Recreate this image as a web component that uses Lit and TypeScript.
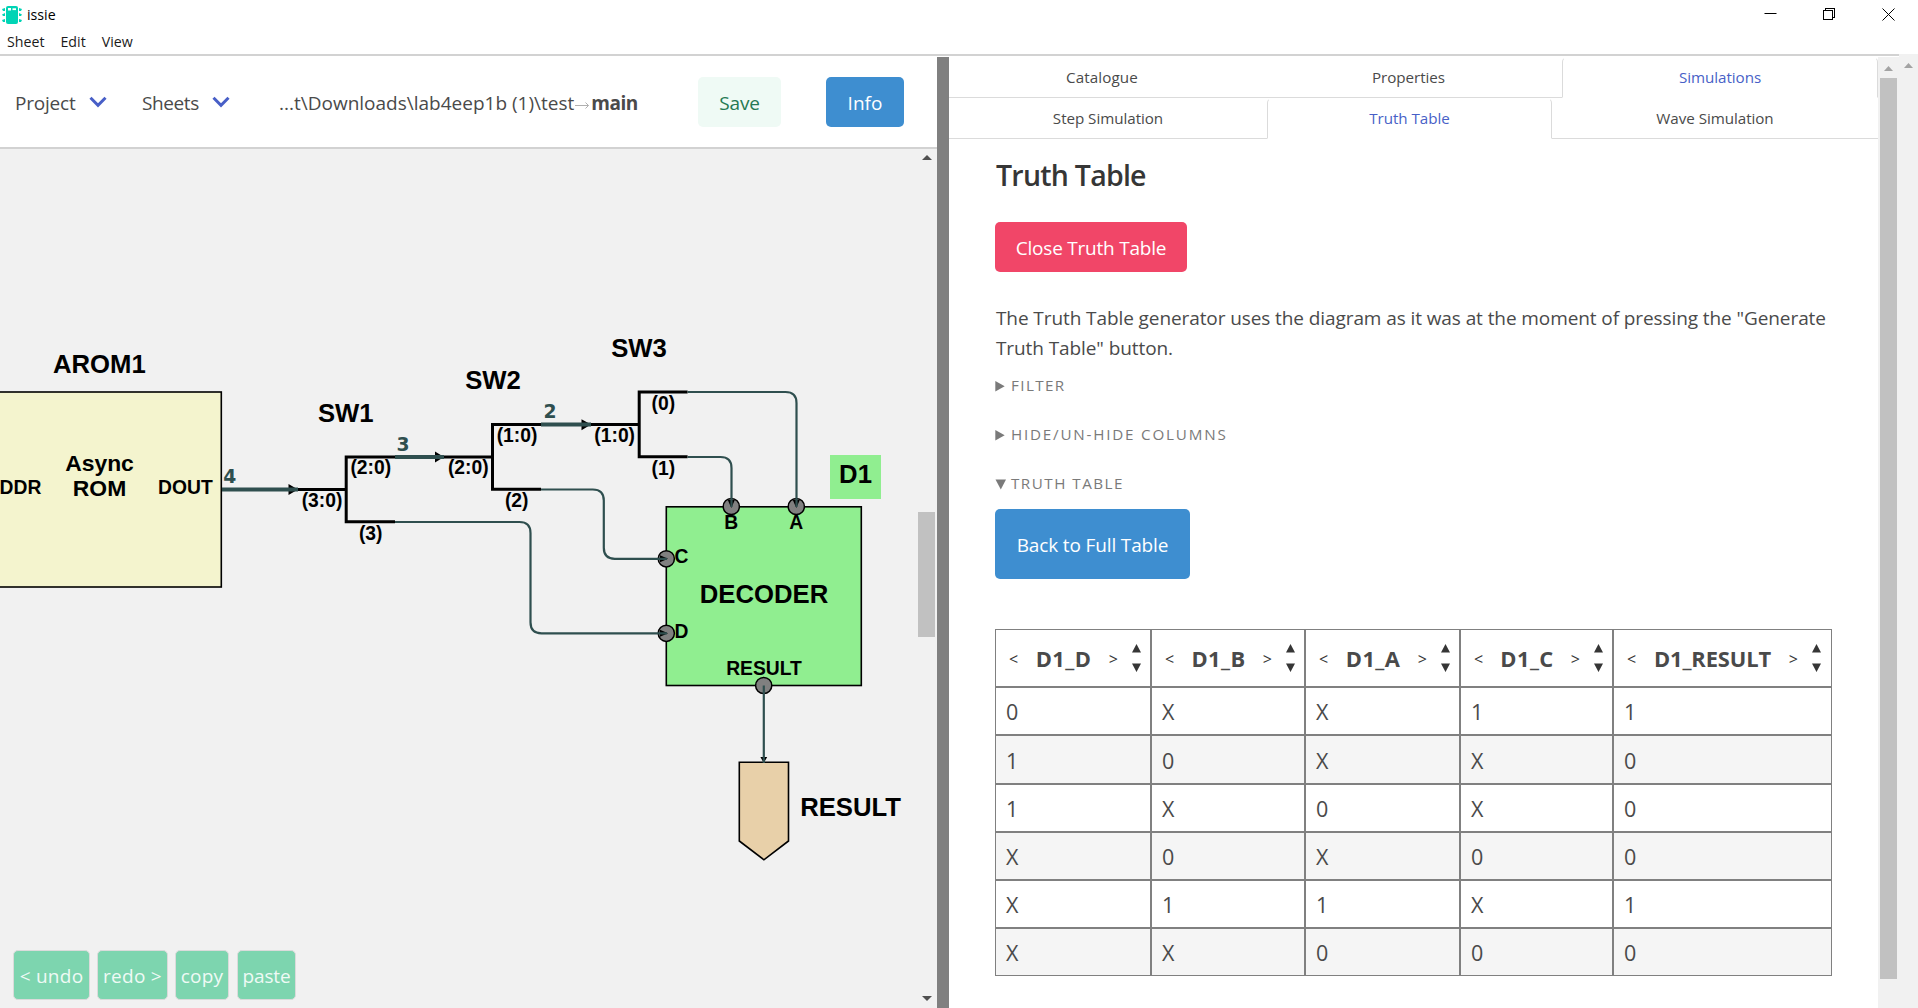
import { LitElement, html, svg, css } from 'lit';
import { customElement } from 'lit/decorators.js';
import { classMap } from 'lit/directives/class-map.js';

const ui = css`"Segoe UI", "Open Sans", "Noto Sans", sans-serif`;

@customElement('title-bar')
class TitleBar extends LitElement {
  static styles = css`
    :host { display: block; height: 54px; background: #fff; color: #000; font: 14.2px/20px ${ui}; }
    .caption { display: flex; height: 29px; align-items: center; padding-left: 2px; }
    .name { margin-left: 5px; color: #000; }
    .controls { margin-left: auto; margin-right: 23px; display: flex; gap: 46px; }
    .menu { display: flex; gap: 16px; padding: 3px 0 0 7px; }
    .menu span { color: #1a1a1a; }
    svg { display: block; }
  `;
  render() {
    return html`
      <div class="caption">
        <svg width="20" height="20" viewBox="0 0 20 20" fill="#00d4b5">
          <rect x="4" y="1" width="12" height="18" rx="2" />
          <path d="M0 4l3-1v3H1zM0 9.500l3-1.500v3H1zM0 15l3-1v3H1zM20 4l-3-1v3h2zM20 9.500l-3-1.500v3h2zM20 15l-3-1v3h2z" />
          <rect x="6" y="3" width="3" height="2.500" fill="#fff" />
          <rect x="10.500" y="3.300" width="3.500" height="1.800" fill="#fff" />
        </svg>
        <span class="name">issie</span>
        <div class="controls">
          <svg width="13" height="13" stroke="#000" fill="none"><path d="M0.500 5.500h12" /></svg>
          <svg width="13" height="13" stroke="#000" fill="none" shape-rendering="crispEdges">
            <rect x="0.500" y="2.500" width="9" height="9" /><path d="M2.500 2.500v-2h9v9h-2" />
          </svg>
          <svg width="13" height="13" stroke="#000" fill="none"><path d="M0.500 0.500l12 12M12.500 0.500l-12 12" /></svg>
        </div>
      </div>
      <div class="menu"><span>Sheet</span><span>Edit</span><span>View</span></div>
    `;
  }
}

@customElement('top-nav')
class TopNav extends LitElement {
  static styles = css`
    :host { display: flex; box-sizing: border-box; height: 93px; align-items: center; padding: 1px 33px 0 15px;
      background: #fff; border-bottom: 2px solid #d2d2d2; color: #4a4a4a; font: 19px/28px ${ui}; letter-spacing: -0.1px; }
    .drop { display: flex; align-items: center; justify-content: space-between; }
    .drop span, .path { padding-top: 2px; }
    .project { width: 92px; letter-spacing: -0.2px; }
    .sheets { width: 88px; margin-left: 35px; letter-spacing: -0.4px; }
    .path { display: flex; align-items: center; margin-left: 49px; white-space: nowrap; letter-spacing: 0; }
    .path b { letter-spacing: -0.5px; margin-left: 1px; }
    .path svg { margin-top: 3px; }
    .buttons { margin-left: auto; display: flex; gap: 45px; }
    .btn { box-sizing: border-box; height: 50px; line-height: 52px; border-radius: 5px; text-align: center; }
    .save { width: 83px; background: #effaf5; color: #257953; letter-spacing: -0.1px; }
    .info { width: 78px; background: #3e8ed0; color: #fff; letter-spacing: 0; }
    svg { display: block; }
  `;
  private chevron() {
    return html`<svg width="18" height="12" viewBox="0 0 18 12" fill="none" stroke="#485fc7" stroke-width="3"><path d="M1.500 1.800L9 9.300L16.500 1.800" /></svg>`;
  }
  render() {
    return html`
      <div class="drop project"><span>Project</span>${this.chevron()}</div>
      <div class="drop sheets"><span>Sheets</span>${this.chevron()}</div>
      <div class="path">
        <span>...t\\Downloads\\lab4eep1b (1)\\test</span>
        <svg width="16" height="8" viewBox="0 0 16 8" fill="none" stroke="#b0b0b0"><path d="M1 4.500h13.500M11.500 1.500l3 3l-3 3" /></svg>
        <b>main</b>
      </div>
      <div class="buttons"><div class="btn save">Save</div><div class="btn info">Info</div></div>
    `;
  }
}

const bigLabels: [number, number, string][] = [
  [99.3, 373.4, 'AROM1'], [345.8, 422, 'SW1'], [493, 389.4, 'SW2'], [639, 357.4, 'SW3'],
  [855.5, 482.7, 'D1'], [764, 603.4, 'DECODER'], [850.6, 816.4, 'RESULT'],
];
const portLabels: [number, number, string][] = [
  [20.5, 493.5, 'DDR'], [185.4, 493.5, 'DOUT'], [370.8, 474.3, '(2:0)'], [468.3, 474.3, '(2:0)'],
  [322, 506.9, '(3:0)'], [370.7, 539.5, '(3)'], [517, 442, '(1:0)'], [614.7, 442, '(1:0)'],
  [663.3, 409.5, '(0)'], [663.3, 474.5, '(1)'], [516.7, 506.9, '(2)'], [731.3, 528.7, 'B'],
  [796.3, 528.7, 'A'], [681.5, 562.5, 'C'], [681.5, 638, 'D'], [764, 674.8, 'RESULT'],
];
const widths: [number, number, string][] = [[229.7, 482.7, '4'], [403, 450.5, '3'], [550, 417.7, '2']];
const ports: [number, number][] = [[731.3, 506.5], [796.3, 506.5], [666.3, 558.8], [666.3, 633.3], [763.7, 685.5]];

@customElement('circuit-canvas')
class CircuitCanvas extends LitElement {
  static styles = css`
    :host { display: flex; position: relative; flex: 1; min-height: 0; background: #f1f1f1; }
    .sheet { display: block; flex: none; }
    .symbol { stroke: #000; stroke-width: 1.6; }
    .split { fill: none; stroke: #000; stroke-width: 3; }
    .wire { fill: none; stroke: #2f4f4f; stroke-width: 2.2; }
    .bus { fill: none; stroke: #2f4f4f; stroke-width: 4; }
    .big, .mid, .port { font-family: "Liberation Sans", Arial, sans-serif; font-weight: 700; text-anchor: middle; }
    .big { font-size: 25.7px; }
    .mid { font-size: 22.9px; }
    .port { font-size: 19.3px; }
    .width { font: 700 18.75px "DejaVu Sans", Verdana, sans-serif; text-anchor: middle; fill: #2f4f4f; }
    .edit { position: absolute; left: 13px; bottom: 8px; display: flex; gap: 8px; }
    .edit span { box-sizing: border-box; height: 50px; border: 1px solid #dbdbdb; border-radius: 5px; background: #7dd5af;
      color: #effaf5; font: 19px/50px ${ui}; text-align: center; white-space: pre; letter-spacing: 0.25px; }
    .undo { width: 77px; } .redo { width: 71px; } .copy { width: 54px; } .paste { width: 59px; }
    .edit .redo { margin-left: -1px; }
    .edit .copy { margin-left: -1px; }
    .edit .paste { letter-spacing: -0.1px; }
    .bar { display: flex; flex-direction: column; align-items: center; justify-content: space-between; width: 20px; box-sizing: border-box; padding: 6px 0 7px; }
    .bar svg { display: block; margin-right: 1px; }
    .thumb { width: 17px; height: 125px; margin: 0 1px 7px 0; background: #c1c1c1; }
  `;
  render() {
    return html`
      <svg class="sheet" width="917" height="859" viewBox="0 149 917 859">
        <rect class="symbol" x="-10" y="392" width="231.300" height="195" fill="#f4f4ce" />
        <rect x="830" y="455" width="51" height="44" fill="#90ee90" />
        <rect class="symbol" x="666.300" y="506.800" width="195" height="178.700" fill="#90ee90" />
        <path class="symbol" d="M739.300 762.200H788.500V841L763.900 859.800L739.300 841Z" fill="#e8d0a9" />
        <path class="split" d="M298 489.500H346M395 457H346.200V521.700H395M444 457H492.500M541 424.600H492.500V489.300H541M591 424.600H639.200M687.600 392H639.200V456.800H687.600" />
        ${ports.map(([x, y]) => svg`<circle cx=${x} cy=${y} r="8.100" fill="#808080" stroke="#000" stroke-width="1.500" />`)}
        <path d="M288.500 484V495L298 489.500ZM435 451.500V462.500L444 457ZM581.500 419.200V430.200L591 424.600Z" />
        <path d="M727.800 500H734.800L731.300 508ZM792.800 500H799.800L796.300 508ZM660 555.300V562.300L668 558.800ZM660 629.800V636.800L668 633.300ZM760.400 757H767.200L763.800 763Z" />
        <path class="bus" d="M222 489.500H298M395 457H444M541 424.600H591" />
        <path class="wire" d="M687.600 392H785.500Q796.500 392 796.500 403V507M687.600 457H720.500Q731.500 457 731.500 468V507M541 489.500H592.800Q603.800 489.500 603.800 500.500V547.800Q603.800 558.800 614.800 558.800H667M395 522H519.500Q530.500 522 530.500 533V622.300Q530.500 633.300 541.500 633.300H667M763.800 685.500V763" />
        ${bigLabels.map(([x, y, t]) => svg`<text class="big" x=${x} y=${y}>${t}</text>`)}
        <text class="mid" x="99.500" y="470.700">Async</text>
        <text class="mid" x="99.500" y="496.400">ROM</text>
        ${portLabels.map(([x, y, t]) => svg`<text class="port" x=${x} y=${y}>${t}</text>`)}
        ${widths.map(([x, y, t]) => svg`<text class="width" x=${x} y=${y}>${t}</text>`)}
      </svg>
      <div class="bar">
        <svg width="10" height="5" fill="#505050"><path d="M0 5L5 0L10 5Z" /></svg>
        <div class="thumb"></div>
        <svg width="10" height="5" fill="#505050"><path d="M0 0L5 5L10 0Z" /></svg>
      </div>
      <div class="edit">
        <span class="undo">&lt; undo</span><span class="redo">redo &gt;</span><span class="copy">copy</span><span class="paste">paste</span>
      </div>
    `;
  }
}

const columns = ['D1_D', 'D1_B', 'D1_A', 'D1_C', 'D1_RESULT'];
const rows = ['0XX11', '10XX0', '1X0X0', 'X0X00', 'X11X1', 'XX000'];

@customElement('truth-panel')
class TruthPanel extends LitElement {
  static styles = css`
    :host { display: block; width: 929px; background: #fff; color: #4a4a4a; font: 19px/30px ${ui}; }
    .tabs { display: grid; font-size: 15.2px; line-height: 41px; text-align: center; letter-spacing: -0.05px; }
    .tabs span { box-sizing: border-box; height: 41px; border-bottom: 1px solid #dbdbdb; }
    .tabs .on { border: 1px solid #dbdbdb; border-color: transparent #dbdbdb; border-radius: 5px 5px 0 0; color: #485fc7; line-height: 39px; }
    .tabs .wide { letter-spacing: 0.1px; }
    .main { grid-template-columns: 306px 307px 316px; }
    .sub { grid-template-columns: 318px 285px 326px; }
    .body { padding: 18px 46px 0; }
    h3 { margin: 0; font-size: 28.5px; line-height: 36px; font-weight: 600; color: #363636; letter-spacing: -0.75px; padding-left: 1px; }
    .btn { width: fit-content; box-sizing: border-box; border-radius: 5px; color: #fff; text-align: center; white-space: nowrap; }
    .close { width: 192px; height: 50px; line-height: 52px; margin-top: 29px; background: #f14668; letter-spacing: -0.22px; }
    p { margin: 31px 0 0; padding-left: 1px; width: 835px; letter-spacing: -0.09px; }
    .fold { display: flex; align-items: center; height: 24px; gap: 5px; margin-top: 25px; font-size: 15.2px; line-height: 23px; color: #7a7a7a; letter-spacing: 1.8px; }
    .filter { margin-top: 11px; letter-spacing: 1.4px; }
    .truth { letter-spacing: 1.5px; }
    .fold svg { display: block; margin-top: 1px; }
    .fold span { height: 24px; }
    .back { width: 195px; height: 70px; line-height: 72px; margin-top: 13px; background: #3e8ed0; letter-spacing: -0.14px; }
    .table { display: grid; grid-template-columns: 156px 154px 155px 153px 219px; grid-template-rows: 58px 48px 49px 48px 48px 48px 48px; margin-top: 50px; width: 837px; }
    .cell { box-sizing: border-box; border: 1px solid #808080; display: flex; align-items: center; padding: 2px 0 0 10px; font-size: 21.5px; }
    .alt { background: #f5f5f5; }
    .head { justify-content: space-between; padding: 1px 9px 0 13px; font-size: 16px; color: #363636; }
    .head b { font-size: 21.9px; color: #4a4a4a; letter-spacing: 0.4px; margin: 0 -4px; }
    .head .long { letter-spacing: -0.1px; }
    .head:has(.long) { padding-right: 10px; }
    .end { display: flex; align-items: center; gap: 14px; }
    .end svg { display: block; margin-top: -2px; }
  `;
  private fold(label: string, open: boolean, cls = '') {
    return html`<div class="fold ${cls}">
      <svg width="11" height="11" fill="#7a7a7a">${open ? svg`<path d="M0.500 0.500H11L5.800 10.500Z" />` : svg`<path d="M0.300 0L9.700 5.200L0.300 10.500Z" />`}</svg>
      <span>${label}</span></div>`;
  }
  render() {
    return html`
      <div class="tabs main"><span class="wide">Catalogue</span><span>Properties</span><span class="on">Simulations</span></div>
      <div class="tabs sub"><span>Step Simulation</span><span class="on">Truth Table</span><span>Wave Simulation</span></div>
      <div class="body">
        <h3>Truth Table</h3>
        <div class="btn close">Close Truth Table</div>
        <p>The Truth Table generator uses the diagram as it was at the moment of pressing the "Generate Truth Table" button.</p>
        ${this.fold('FILTER', false, 'filter')}
        ${this.fold('HIDE/UN-HIDE COLUMNS', false)}
        ${this.fold('TRUTH TABLE', true, 'truth')}
        <div class="btn back">Back to Full Table</div>
        <div class="table">
          ${columns.map((c) => html`<div class="cell head"><span>&lt;</span><b class=${classMap({ long: c.length > 4 })}>${c}</b>
            <span class="end"><span>&gt;</span><svg width="9" height="28" fill="#363636"><path d="M0 8.500L4.500 0L9 8.500ZM0 19.500L4.500 28L9 19.500Z" /></svg></span></div>`)}
          ${rows.map((r, i) => [...r].map((v) => html`<div class=${classMap({ cell: true, alt: i % 2 === 1 })}>${v}</div>`))}
        </div>
      </div>
    `;
  }
}

@customElement('app-root')
class AppRoot extends LitElement {
  static styles = css`
    :host { display: flex; flex-direction: column; width: 1918px; height: 1008px; overflow: hidden; background: #fff; }
    .window { display: flex; height: 954px; }
    .page { width: 1899px; box-sizing: border-box; border-top: 2px solid #d2d2d2; display: flex; }
    .left { width: 937px; display: flex; flex-direction: column; }
    .divider { width: 12px; margin-top: 1px; background: #808080; }
    truth-panel, .inner { margin-top: 1px; }
    .inner { width: 21px; background: #f1f1f1; display: flex; flex-direction: column; align-items: center; padding-top: 9px; box-sizing: border-box; }
    .thumb { width: 17px; height: 901px; margin-top: 7px; background: #c1c1c1; }
    .outer { width: 19px; background: #f1f1f1; display: flex; justify-content: center; padding-top: 9px; box-sizing: border-box; }
    svg { display: block; }
  `;
  private up() {
    return html`<svg width="9" height="5" fill="#a3a3a3"><path d="M0 5L4.500 0L9 5Z" /></svg>`;
  }
  render() {
    return html`
      <title-bar></title-bar>
      <div class="window">
        <div class="page">
          <div class="left"><top-nav></top-nav><circuit-canvas></circuit-canvas></div>
          <div class="divider"></div>
          <truth-panel></truth-panel>
          <div class="inner">${this.up()}<div class="thumb"></div></div>
        </div>
        <div class="outer">${this.up()}</div>
      </div>
    `;
  }
}
